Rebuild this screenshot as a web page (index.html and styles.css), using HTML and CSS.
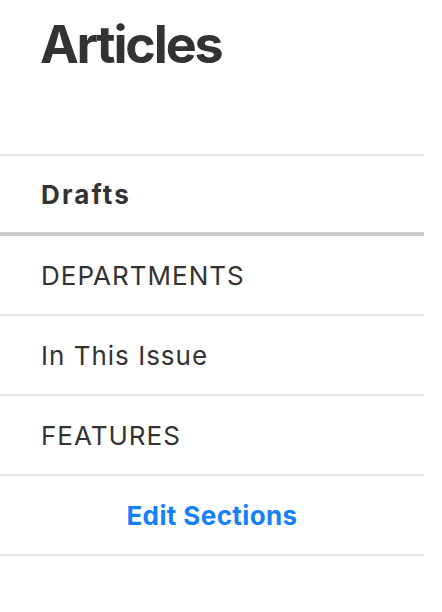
FILE: index.html
```html
<!DOCTYPE html>
<html lang="en">
<head>
    <meta charset="UTF-8">
    <title>Articles</title>
    <link rel="stylesheet" href="styles.css">
</head>
<body>
<div class="page">
    <div class="header">
        <h1>Articles</h1>
    </div>
    <ul class="sections">
        <li class="drafts">Drafts</li>
        <li>DEPARTMENTS</li>
        <li>In This Issue</li>
        <li>FEATURES</li>
        <li class="edit">Edit Sections</li>
    </ul>
</div>
</body>
</html>
```

FILE: styles.css
```css
*{
    margin: 0;
    padding: 0;
}
body{
    background: #fff;
    font-family: Inter, "Noto Sans", sans-serif;
    color: #333;
}
.page{
    width: 424px;
}
.header{
    height: 154px;
    padding-left: 40px;
    box-sizing: border-box;
}
.header h1{
    font-size: 52px;
    font-weight: 700;
    line-height: 1;
    padding-top: 19px;
    letter-spacing: -2.2px;
}
.sections{
    list-style: none;
    border-top: 2px solid #e5e5e5;
}
.sections>li{
    height: 78px;
    display: flex;
    align-items: center;
    padding-left: 41px;
    font-size: 26px;
    letter-spacing: 1px;
    border-bottom: 2px solid #e5e5e5;
}
.sections .drafts{
    height: 76px;
    font-weight: 700;
    letter-spacing: 2.1px;
    border-bottom: 4px solid #ccc;
}
.sections .edit{
    justify-content: center;
    padding-left: 0;
    color: #1680fa;
    font-weight: 700;
    letter-spacing: 0.4px;
}
```
